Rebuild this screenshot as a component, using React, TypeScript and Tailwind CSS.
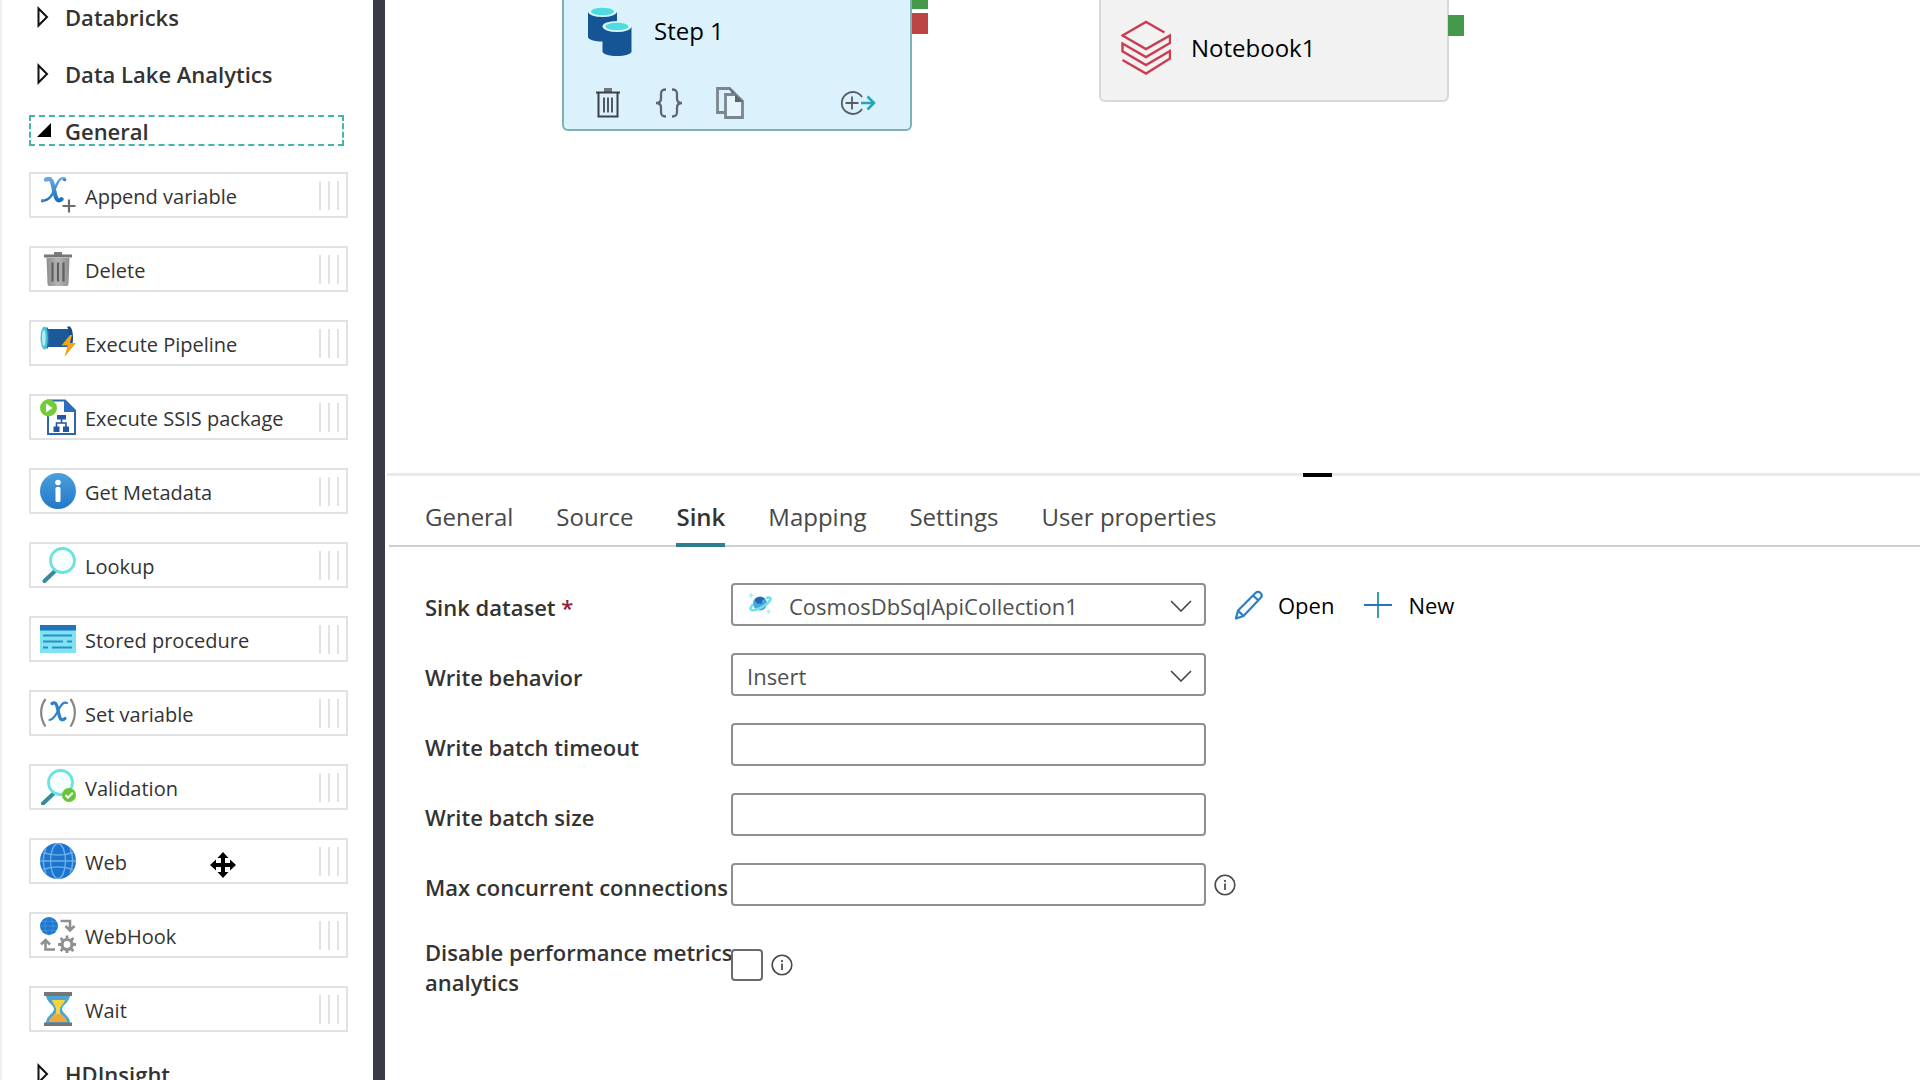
import { useState, type ReactNode } from "react";

/* ---------- activity icons (36 x 36) ---------- */

function Icon({ children }: { children: ReactNode }) {
  return (
    <svg viewBox="0 0 36 36" className="size-9 shrink-0" aria-hidden="true">
      {children}
    </svg>
  );
}

function AppendVariableIcon() {
  return (
    <Icon>
      <defs>
        <linearGradient id="appendX" x1="0" y1="0" x2="0" y2="1">
          <stop offset="0" stopColor="#6aa9e0" />
          <stop offset="1" stopColor="#1a6fc0" />
        </linearGradient>
      </defs>
      <g fill="none" stroke="url(#appendX)" strokeLinecap="round">
        <path d="M6 2.600c4-2 5.500 0 6.500 4l3 12.500c1 4 3 5.500 6 3" strokeWidth="4.200" />
        <path d="M25 1.800c-4-2-6.500 1.500-9.500 8.500-3 7.500-6 13-13 13.500" strokeWidth="2.400" />
        <circle cx="24.600" cy="2.400" r=".8" strokeWidth="2" />
        <circle cx="2.600" cy="23.600" r=".8" strokeWidth="2" />
      </g>
      <path d="M29 22.500v13M22.500 29h13" stroke="#6b6b6b" strokeWidth="2.200" />
    </Icon>
  );
}

function DeleteIcon() {
  return (
    <Icon>
      <defs>
        <linearGradient id="binBody" x1="0" x2="1" y1="0" y2="0">
          <stop offset="0" stopColor="#8f8f8f" />
          <stop offset=".5" stopColor="#b5b5b5" />
          <stop offset="1" stopColor="#8f8f8f" />
        </linearGradient>
      </defs>
      <path d="M14 1h8v3h-8z" fill="#7c7c7c" />
      <path d="M4 3.500h28v3H4z" fill="#767676" />
      <path d="M6.500 7h23l-1 26a2 2 0 0 1-2 2h-17a2 2 0 0 1-2-2z" fill="url(#binBody)" />
      <path d="M12.500 11.500v19M18 11.500v19M23.500 11.500v19" stroke="#5f5f5f" strokeWidth="2.200" />
    </Icon>
  );
}

function ExecutePipelineIcon() {
  return (
    <Icon>
      <path d="M4 4h26v18H4z" fill="#1b5998" />
      <path d="M27 1.500h3c2 2 3 6 3 11.500s-1 9-3 11.500h-3c2-4 2.500-7 2.500-11.500S29 5 27 1.500z" fill="#164b85" />
      <ellipse cx="4.500" cy="13" rx="4" ry="11.500" fill="#4cc4d6" />
      <ellipse cx="3.800" cy="13" rx="1.800" ry="8" fill="#b5eef2" />
      <path d="M7 2.500c2 5 2 16 0 21" stroke="#2a6fb5" strokeWidth="1.500" fill="none" />
      <path d="M30 10 21.500 20.500h6L24.500 32 36 18h-6l2-8z" fill="#f2a41d" />
    </Icon>
  );
}

function ExecuteSsisIcon() {
  return (
    <Icon>
      <path d="M8 1.500h17l10 10V35H8z" fill="#fff" stroke="#2c66ad" strokeWidth="2" />
      <path d="M24 1 36 13H24z" fill="#2c6fbf" />
      <path d="M17 16h9v4.500h-9zM13.500 27.500h6V33h-6zM23 27.500h6V33h-6z" fill="#2157a3" />
      <path d="M21.500 20v4M16.500 28v-4H26v4" stroke="#2157a3" strokeWidth="1.600" fill="none" />
      <circle cx="8.500" cy="9" r="8.500" fill="#74cc38" />
      <path d="M6 4.500 12.500 9 6 13.500z" fill="#fff" />
    </Icon>
  );
}

function MetadataIcon() {
  return (
    <Icon>
      <defs>
        <linearGradient id="infoDisc" x1="0" x2="0" y1="0" y2="1">
          <stop offset="0" stopColor="#4a9fdc" />
          <stop offset="1" stopColor="#2278c8" />
        </linearGradient>
      </defs>
      <circle cx="18" cy="18" r="18" fill="url(#infoDisc)" />
      <circle cx="18" cy="9.500" r="2.800" fill="#fff" />
      <rect x="15.500" y="14" width="5" height="15" rx="1.500" fill="#fff" />
    </Icon>
  );
}

function LookupIcon() {
  return (
    <Icon>
      <path d="M15 24 4.500 34" stroke="#358a9c" strokeWidth="4" strokeLinecap="round" />
      <circle cx="22.500" cy="13.500" r="12" fill="#f7ffff" stroke="#6be3e0" strokeWidth="2.800" />
    </Icon>
  );
}

function StoredProcedureIcon() {
  return (
    <Icon>
      <path d="M0 4h36v28H0z" fill="#7fe3f3" />
      <path d="M0 4h36v5.500H0z" fill="#1f74bd" />
      <path
        d="M3 14.500h29M3 20.500h20M27 20.500h5M3 26.500h5M12 26.500h20"
        stroke="#2c8fc4"
        strokeWidth="2"
      />
    </Icon>
  );
}

function SetVariableIcon() {
  return (
    <Icon>
      <path
        d="M5.500 4C-.3 12-.3 23 5.500 31.500M30.500 4c5.800 8 5.800 19 0 27.500"
        fill="none"
        stroke="#868686"
        strokeWidth="2.200"
      />
      <g fill="none" stroke="#2f80cb" strokeLinecap="round">
        <path d="M12 8.500c3-1.500 4.500 0 5 3l2.500 10c.7 3 2.500 4.500 5.500 2" strokeWidth="3.200" />
        <path d="M27 8c-3.500-1.500-5.500 1-8 6s-5 10.500-9.500 11" strokeWidth="2" />
      </g>
    </Icon>
  );
}

function ValidationIcon() {
  return (
    <Icon>
      <path d="M13 25 3 34.500" stroke="#358a9c" strokeWidth="4" strokeLinecap="round" />
      <circle cx="20.500" cy="13.500" r="12" fill="#f7ffff" stroke="#67e3e3" strokeWidth="2.800" />
      <circle cx="29" cy="26" r="7" fill="#67c535" />
      <path d="m25.500 26 2.500 2.700 4.800-5" stroke="#fff" strokeWidth="2" fill="none" />
    </Icon>
  );
}

function WebIcon() {
  return (
    <Icon>
      <circle cx="18" cy="18" r="18" fill="#1c74cc" />
      <g fill="none" stroke="#6fb0ea" strokeWidth="1.400">
        <ellipse cx="18" cy="18" rx="7.500" ry="17.500" />
        <path d="M0 18h36M3 9.500c9 3.500 21 3.500 30 0M3 26.500c9-3.500 21-3.500 30 0M6 5.500c-3.500 8-3.500 17 0 25M30 5.500c3.500 8 3.500 17 0 25" />
      </g>
    </Icon>
  );
}

function WebHookIcon() {
  return (
    <Icon>
      <circle cx="9" cy="9" r="9" fill="#1f78cf" />
      <g fill="none" stroke="#4b93dc" strokeWidth=".8">
        <ellipse cx="9" cy="9" rx="4" ry="9" />
        <path d="M0 9h18M2 4.500h14M2 13.500h14" />
      </g>
      <g fill="none" stroke="#8f8f8f" strokeWidth="2.600">
        <path d="M20.500 4h9.500v8M25.500 9l4.500 4.500L34.500 9M15 32.500H5.500V25M1 27.500 5.500 23l4.500 4.500" />
        <circle cx="27" cy="27.500" r="5" strokeWidth="3.200" />
        <path
          d="M27 18.500v3M27 33.500v3M18 27.500h3M33 27.500h3M20.600 21.100l2.200 2.200M31.200 31.700l2.200 2.200M33.400 21.100l-2.200 2.200M22.800 31.700l-2.200 2.200"
          strokeWidth="2.800"
        />
      </g>
    </Icon>
  );
}

function WaitIcon() {
  return (
    <Icon>
      <path d="M6 4h24c0 7-8 10-8 14s8 7 8 14H6c0-7 8-10 8-14S6 11 6 4z" fill="#4aa5d6" />
      <path d="M12 9h13c-1 4-5 6-5 9v4c1 2 6 4 7 9H9c1-5 6-7 7-9v-4c0-3-3-5-4-9z" fill="#f7d33c" />
      <path d="M9 31c1.500-5 6-8 9-8s7.500 3 9 8z" fill="#f0a63a" />
      <path d="M4 1h28v4H4zM4 31.500h28v3.500H4z" fill="#757578" />
    </Icon>
  );
}

/* ---------- sidebar ---------- */

const activities: { name: string; icon: ReactNode }[] = [
  { name: "Append variable", icon: <AppendVariableIcon /> },
  { name: "Delete", icon: <DeleteIcon /> },
  { name: "Execute Pipeline", icon: <ExecutePipelineIcon /> },
  { name: "Execute SSIS package", icon: <ExecuteSsisIcon /> },
  { name: "Get Metadata", icon: <MetadataIcon /> },
  { name: "Lookup", icon: <LookupIcon /> },
  { name: "Stored procedure", icon: <StoredProcedureIcon /> },
  { name: "Set variable", icon: <SetVariableIcon /> },
  { name: "Validation", icon: <ValidationIcon /> },
  { name: "Web", icon: <WebIcon /> },
  { name: "WebHook", icon: <WebHookIcon /> },
  { name: "Wait", icon: <WaitIcon /> },
];

function GroupHeader({ label, open = false }: { label: string; open?: boolean }) {
  return (
    <button
      type="button"
      aria-expanded={open}
      className={
        "mr-1 flex h-[31px] shrink-0 items-center border-2 border-dashed text-left text-[22px] leading-7 font-semibold text-[#333] " +
        (open ? "border-[#45b5a9]" : "border-transparent")
      }
    >
      <svg viewBox="0 0 24 24" className="ml-1 size-6" aria-hidden="true">
        {open ? (
          <path d="M16 4v14H2z" fill="#000" />
        ) : (
          <path d="M3.500 3.500v17L12 12z" fill="none" stroke="#111" strokeWidth="2" />
        )}
      </svg>
      <span className="ml-1.5">{label}</span>
    </button>
  );
}

function ActivityItem({ name, icon }: { name: string; icon: ReactNode }) {
  return (
    <li className="relative flex h-[46px] items-center border-2 border-[#e2e2e2] bg-white pr-[7px] pl-[9px]">
      {icon}
      <span className="ml-[9px] grow pt-1 text-xl leading-7 text-[#333]">{name}</span>
      <span className="flex gap-[7px]" aria-hidden="true">
        <i className="h-[29px] w-0.5 bg-[#e2e2e2]" />
        <i className="h-[29px] w-0.5 bg-[#e2e2e2]" />
        <i className="h-[29px] w-0.5 bg-[#e2e2e2]" />
      </span>
      {name === "Web" && (
        <svg viewBox="0 0 26 26" className="absolute top-3 left-[179px] size-[26px]" aria-hidden="true">
          <path
            d="M13 0l5.500 6h-3.500v5h5V7.500L26 13l-6 5.500V15h-5v5h3.500L13 26l-5.500-6H11v-5H6v3.500L0 13l6-5.500V11h5V6H7.500z"
            fill="#000"
          />
        </svg>
      )}
    </li>
  );
}

function Sidebar() {
  return (
    <aside className="flex w-[385px] shrink-0 flex-col gap-[26px] overflow-hidden border-r-12 border-l-2 border-r-[#3a3a46] border-l-[#f0f0f0] pt-px pr-[25px] pl-[27px]">
      <GroupHeader label="Databricks" />
      <GroupHeader label="Data Lake Analytics" />
      <GroupHeader label="General" open />
      <ul className="flex shrink-0 flex-col gap-7">
        {activities.map((a) => (
          <ActivityItem key={a.name} name={a.name} icon={a.icon} />
        ))}
      </ul>
      <GroupHeader label="HDInsight" />
    </aside>
  );
}

/* ---------- pipeline canvas ---------- */

function CopyDataIcon() {
  return (
    <svg viewBox="0 0 44 50" className="h-[50px] w-11" aria-hidden="true">
      <path d="M0 6v25c0 2.500 6.500 4.500 14.500 4.500S29 33.500 29 31V6z" fill="#155595" />
      <ellipse cx="14.500" cy="5.500" rx="14.500" ry="5.500" fill="#d8f6f8" />
      <ellipse cx="14.500" cy="5.500" rx="11.500" ry="3.800" fill="#4fdbe2" />
      <path d="M14.500 21v24.500c0 2.500 6.500 4.500 14.500 4.500s14.500-2 14.500-4.500V21z" fill="#155595" />
      <ellipse cx="29" cy="20.500" rx="14.500" ry="5.500" fill="#d8f6f8" />
      <ellipse cx="29" cy="20.500" rx="11.500" ry="3.800" fill="#4fdbe2" />
    </svg>
  );
}

function DatabricksIcon() {
  return (
    <svg viewBox="0 0 50 56" className="h-14 w-[50px]" aria-hidden="true">
      <path
        d="M43.500 12.500 25 2 1.500 15.500 25 29l24-13.500V23L25 37 1.500 23.500v7.800L25 45l24-14v7.500L25 53.500 1.500 40M25 37l24-14M25 45l24-14"
        fill="none"
        stroke="#cc3c50"
        strokeWidth="2.400"
      />
    </svg>
  );
}

function StepNode() {
  return (
    <div className="absolute top-0 left-[177px] h-[131px] w-[350px] rounded-b-md border-2 border-t-0 border-[#7fb0b5] bg-[#dbf2fd]">
      <div className="flex items-center gap-[22px] pt-1.5 pl-6">
        <CopyDataIcon />
        <span className="text-2xl leading-8 text-black">Step 1</span>
      </div>
      <div className="mt-[31px] flex items-center pr-[34px] pl-8">
        <button type="button" aria-label="Delete" className="w-[26px]">
          <svg viewBox="0 0 24 30" className="h-[30px] w-6" aria-hidden="true">
            <path d="M8 0h8v4H8z" fill="#6f7780" />
            <path d="M0 4.500h24M2.500 5v23.500h19V5" fill="none" stroke="#3c4047" strokeWidth="2" />
            <path d="M8 9.500v15M12 9.500v15M16 9.500v15" stroke="#3c4047" strokeWidth="1.700" />
          </svg>
        </button>
        <button type="button" aria-label="Code" className="ml-[33px] w-7">
          <svg viewBox="0 0 28 30" className="h-[30px] w-7" aria-hidden="true">
            <path
              d="M11 1.500C7 1.500 6 3 6 6v4.500c0 3-1.500 4.500-5 4.500 3.500 0 5 1.500 5 4.500V24c0 3 1 4.500 5 4.500M17 1.500c4 0 5 1.500 5 4.500v4.500c0 3 1.500 4.500 5 4.500-3.500 0-5 1.500-5 4.500V24c0 3-1 4.500-5 4.500"
              fill="none"
              stroke="#60666d"
              strokeWidth="2.300"
            />
          </svg>
        </button>
        <button type="button" aria-label="Clone" className="ml-[33px] w-7">
          <svg viewBox="0 0 28 32" className="h-8 w-7" aria-hidden="true">
            <path d="M9 25.500H1.500v-24h12L19 6.500" fill="none" stroke="#7c868e" strokeWidth="2.800" />
            <path d="M9.500 7.500h10L26.500 14v16.500h-17z" fill="#e6f5fc" stroke="#7c868e" strokeWidth="2.800" />
            <path d="M19 7v8h8zM13 1l6 5.500h-3z" fill="#5c656d" />
          </svg>
        </button>
        <button type="button" aria-label="Add output" className="ml-auto w-9">
          <svg viewBox="0 0 36 26" className="h-[26px] w-9" aria-hidden="true">
            <path d="M22 7A11 11 0 1 0 22 19" fill="none" stroke="#565c62" strokeWidth="1.800" />
            <path d="M12 6.500v13M5.500 13h13" stroke="#565c62" strokeWidth="1.800" />
            <path d="M21 13h13M27.500 6.500 34 13l-6.500 6.500" fill="none" stroke="#27a5b8" strokeWidth="2.600" />
          </svg>
        </button>
      </div>
      <i className="absolute top-0 left-[348px] h-[9px] w-4 bg-[#46994a]" />
      <i className="absolute top-[13px] left-[348px] h-[21px] w-4 bg-[#bd4445]" />
    </div>
  );
}

function NotebookNode() {
  return (
    <div className="absolute top-0 left-[714px] h-[102px] w-[350px] rounded-b-md border-2 border-t-0 border-[#d8d8d8] bg-[#f2f2f2]">
      <div className="flex items-center gap-5 pt-5 pl-5">
        <DatabricksIcon />
        <span className="text-2xl leading-8 text-black">Notebook1</span>
      </div>
      <i className="absolute top-[15px] left-[347px] h-[21px] w-4 bg-[#46994a]" />
    </div>
  );
}

/* ---------- properties panel ---------- */

const tabs = ["General", "Source", "Sink", "Mapping", "Settings", "User properties"];

function InfoIcon() {
  return (
    <svg viewBox="0 0 22 22" className="size-[22px] shrink-0" role="img" aria-label="More information">
      <circle cx="11" cy="11" r="9.800" fill="none" stroke="#484848" strokeWidth="1.600" />
      <path d="M11 9.500v6.500M11 6v2" stroke="#484848" strokeWidth="1.700" />
    </svg>
  );
}

function CosmosIcon() {
  return (
    <svg viewBox="0 0 24 22" className="pointer-events-none absolute top-2.5 left-[17px] h-[22px] w-6" aria-hidden="true">
      <circle cx="12" cy="10.500" r="7" fill="#4aa3dc" />
      <path d="M7 6c3-3 8-2.500 10 0-3 .5-4 2.500-3 4.500-4 1-7-.5-7-4.500z" fill="#2467b0" />
      <path
        d="M18 5c4-1 5.500 0 4 2.500-2 3.500-9 8-15.500 9.500-5 .8-5-2-1.500-5.500"
        fill="none"
        stroke="#6ce3ec"
        strokeWidth="2.600"
      />
      <path d="M3 0v5M.5 2.500h5M20.500 16.500v4M18.500 18.500h4" stroke="#a8eef2" strokeWidth="1.500" />
    </svg>
  );
}

function SelectBox({ id, value, icon }: { id: string; value: string; icon?: ReactNode }) {
  return (
    <div className="relative w-[475px]">
      <select
        id={id}
        className={
          "block h-[43px] w-full appearance-none rounded-sm border-2 border-[#8f8f8f] bg-white pt-0.5 text-[22px] leading-8 text-[#505050] " +
          (icon ? "pl-14" : "pl-3.5")
        }
      >
        <option>{value}</option>
      </select>
      {icon}
      <svg viewBox="0 0 22 12" className="pointer-events-none absolute top-[17px] right-3.5 h-3 w-[22px]" aria-hidden="true">
        <path d="M1 1l10 10L21 1" fill="none" stroke="#454545" strokeWidth="1.600" />
      </svg>
    </div>
  );
}

function TextBox({ id }: { id: string }) {
  return (
    <input
      id={id}
      type="text"
      className="h-[43px] w-[475px] rounded-sm border-2 border-[#8f8f8f] bg-white px-3.5 text-[22px] text-[#505050]"
    />
  );
}

function Field({ id, label, required, children }: { id: string; label: string; required?: boolean; children: ReactNode }) {
  return (
    <div className="flex min-h-[43px] items-center">
      <label htmlFor={id} className="-mr-1 w-[310px] shrink-0 pt-1 text-[22px] leading-[30px] font-semibold text-[#333]">
        {label}
        {required && <span className="text-[#8e1f3a]"> *</span>}
      </label>
      {children}
    </div>
  );
}

function PropertiesPanel() {
  const [active, setActive] = useState("Sink");
  return (
    <section>
      <div role="tablist" className="ml-1 flex h-[71px] items-end gap-[43px] border-b-2 border-[#cfcfcf] pl-9">
        {tabs.map((t) => (
          <button
            key={t}
            type="button"
            role="tab"
            aria-selected={t === active}
            onClick={() => setActive(t)}
            className={
              "-mb-0.5 border-b-4 pb-2 text-2xl leading-9 " +
              (t === active ? "border-[#2d7f8c] font-semibold text-[#333]" : "border-transparent text-[#484848]")
            }
          >
            {t}
          </button>
        ))}
      </div>
      <form className="flex flex-col gap-[27px] pt-9 pl-10">
        <Field id="dataset" label="Sink dataset" required>
          <SelectBox id="dataset" value="CosmosDbSqlApiCollection1" icon={<CosmosIcon />} />
          <button type="button" className="ml-7 flex items-center gap-3.5 text-[22px] leading-8 text-black">
            <svg viewBox="0 0 30 30" className="size-[30px]" aria-hidden="true">
              <path
                d="M2 28.500l2-8L21.500 3c1.500-1.500 3.500-1.500 5 0s1.500 3.500 0 5L9.500 26zM4 20.500l5.500 5.500M19 5.500l5.500 5"
                fill="none"
                stroke="#2a7fc4"
                strokeWidth="2.200"
                strokeLinejoin="round"
              />
            </svg>
            Open
          </button>
          <button type="button" className="ml-[30px] flex items-center gap-4 text-[22px] leading-8 text-black">
            <svg viewBox="0 0 28 28" className="size-7" aria-hidden="true">
              <path d="M14 1v26" stroke="#3a9aa8" strokeWidth="2" />
              <path d="M0 14h28" stroke="#2a74bd" strokeWidth="2" />
            </svg>
            New
          </button>
        </Field>
        <Field id="behavior" label="Write behavior">
          <SelectBox id="behavior" value="Insert" />
        </Field>
        <Field id="timeout" label="Write batch timeout">
          <TextBox id="timeout" />
        </Field>
        <Field id="size" label="Write batch size">
          <TextBox id="size" />
        </Field>
        <Field id="connections" label="Max concurrent connections">
          <TextBox id="connections" />
          <span className="ml-2">
            <InfoIcon />
          </span>
        </Field>
        <Field id="metrics" label="Disable performance metrics analytics">
          <input
            id="metrics"
            type="checkbox"
            className="mr-2 size-8 shrink-0 appearance-none rounded-sm border-2 border-[#6a6a6a] bg-white checked:bg-[#2d7f8c]"
          />
          <InfoIcon />
        </Field>
      </form>
    </section>
  );
}

export default function App() {
  return (
    <div className="flex h-screen overflow-hidden bg-white font-['Open_Sans',sans-serif]">
      <Sidebar />
      <main className="min-w-0 grow">
        <div className="relative h-[473px]">
          <StepNode />
          <NotebookNode />
        </div>
        <div className="ml-0.5 flex h-[3px] justify-center bg-[#eaeaea] pl-[328px]">
          <i className="h-1 w-[29px] shrink-0 bg-black" />
        </div>
        <PropertiesPanel />
      </main>
    </div>
  );
}
